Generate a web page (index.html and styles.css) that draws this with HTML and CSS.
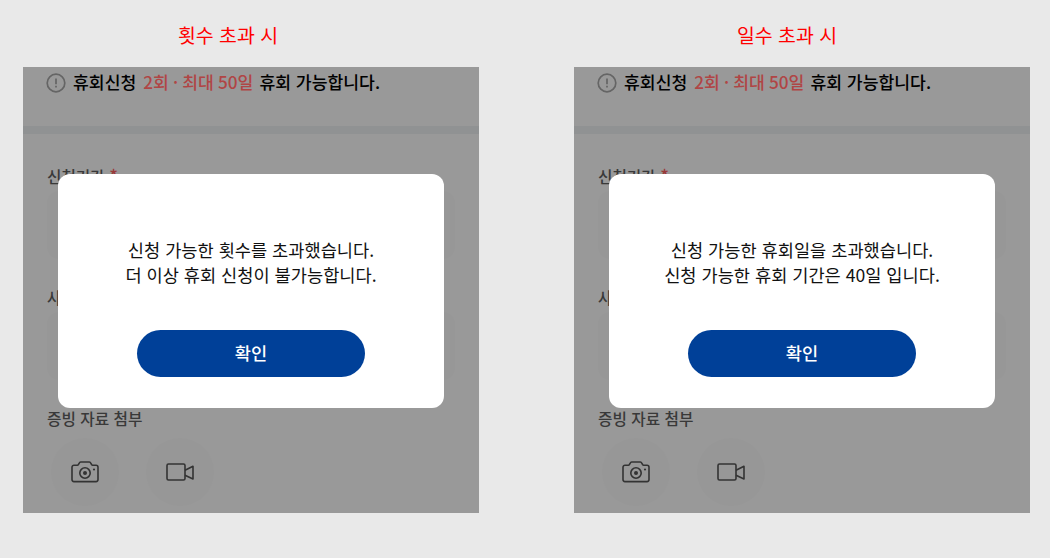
FILE: index.html
```html
<!DOCTYPE html>
<html lang="ko">
<head>
    <meta charset="UTF-8">
    <title>휴회신청 알림</title>
    <link rel="stylesheet" href="styles.css">
</head>
<body>
    <div class="container">
        <!-- 횟수 초과 -->
        <div class="case">
            <h2>횟수 초과 시</h2>
            <div class="screen">
                <div class="notice">
                    <svg class="notice-icon" viewBox="0 0 20 20">
                        <circle cx="10" cy="10" r="8.8"/>
                        <path d="M10 5.4v5.8M10 12.8v1.8"/>
                    </svg>
                    <span>휴회신청</span>
                    <span class="limit">2회 · 최대 50일</span>
                    <span>휴회 가능합니다.</span>
                </div>
                <div class="form">
                    <div class="form-item">
                        <label>신청기간 <em>*</em></label>
                        <div class="field"></div>
                    </div>
                    <div class="form-item">
                        <label>사유</label>
                        <div class="field"></div>
                    </div>
                    <div class="form-item">
                        <label>증빙 자료 첨부</label>
                        <div class="attach">
                            <span class="attach-button">
                                <svg viewBox="0 0 28 22">
                                    <path d="M3 4.2h3.5c.8 0 1-.5 1.3-1.3l.4-.8C8.5 1.3 9 1 9.7 1h8.6c.7 0 1.2.3 1.5 1.1l.4.8c.3.8.5 1.3 1.3 1.3H25a2 2 0 0 1 2 2v12.4a2 2 0 0 1-2 2H3a2 2 0 0 1-2-2V6.2a2 2 0 0 1 2-2z"/>
                                    <circle cx="14" cy="12" r="5.2"/>
                                    <circle class="dot" cx="14" cy="12" r="2"/>
                                    <circle class="dot" cx="23" cy="8.5" r="1.1"/>
                                </svg>
                            </span>
                            <span class="attach-button">
                                <svg viewBox="0 0 28 22">
                                    <rect x="1" y="3" width="18" height="16" rx="1.5"/>
                                    <path d="M19 9.3l8-4v12.6l-8-3.6"/>
                                </svg>
                            </span>
                        </div>
                    </div>
                </div>
                <div class="overlay">
                    <div class="modal">
                        <p>신청 가능한 횟수를 초과했습니다.<br>더 이상 휴회 신청이 불가능합니다.</p>
                        <button type="button">확인</button>
                    </div>
                </div>
            </div>
        </div>

        <!-- 일수 초과 -->
        <div class="case">
            <h2 class="days">일수 초과 시</h2>
            <div class="screen">
                <div class="notice">
                    <svg class="notice-icon" viewBox="0 0 20 20">
                        <circle cx="10" cy="10" r="8.8"/>
                        <path d="M10 5.4v5.8M10 12.8v1.8"/>
                    </svg>
                    <span>휴회신청</span>
                    <span class="limit">2회 · 최대 50일</span>
                    <span>휴회 가능합니다.</span>
                </div>
                <div class="form">
                    <div class="form-item">
                        <label>신청기간 <em>*</em></label>
                        <div class="field"></div>
                    </div>
                    <div class="form-item">
                        <label>사유</label>
                        <div class="field"></div>
                    </div>
                    <div class="form-item">
                        <label>증빙 자료 첨부</label>
                        <div class="attach">
                            <span class="attach-button">
                                <svg viewBox="0 0 28 22">
                                    <path d="M3 4.2h3.5c.8 0 1-.5 1.3-1.3l.4-.8C8.5 1.3 9 1 9.7 1h8.6c.7 0 1.2.3 1.5 1.1l.4.8c.3.8.5 1.3 1.3 1.3H25a2 2 0 0 1 2 2v12.4a2 2 0 0 1-2 2H3a2 2 0 0 1-2-2V6.2a2 2 0 0 1 2-2z"/>
                                    <circle cx="14" cy="12" r="5.2"/>
                                    <circle class="dot" cx="14" cy="12" r="2"/>
                                    <circle class="dot" cx="23" cy="8.5" r="1.1"/>
                                </svg>
                            </span>
                            <span class="attach-button">
                                <svg viewBox="0 0 28 22">
                                    <rect x="1" y="3" width="18" height="16" rx="1.5"/>
                                    <path d="M19 9.3l8-4v12.6l-8-3.6"/>
                                </svg>
                            </span>
                        </div>
                    </div>
                </div>
                <div class="overlay">
                    <div class="modal">
                        <p>신청 가능한 휴회일을 초과했습니다.<br>신청 가능한 휴회 기간은 40일 입니다.</p>
                        <button type="button">확인</button>
                    </div>
                </div>
            </div>
        </div>
    </div>
</body>
</html>
```
FILE: styles.css
```css
body {
    margin: 0;
    font-family: "Noto Sans CJK KR", sans-serif;
    background-color: #e9e9e9;
}
.container {
    display: flex;
    gap: 95px;
    padding: 20px 20px 0 23px;
}
.case {
    width: 456px;
}
h2 {
    margin: 0 0 17px;
    padding-right: 46px;
    font-size: 19.4px;
    font-weight: 400;
    line-height: 30px;
    text-align: center;
    color: #f00;
}
h2.days {
    padding-right: 30px;
}
.screen {
    position: relative;
    height: 446px;
    overflow: hidden;
    background-color: #fff;
}
.notice {
    display: flex;
    align-items: center;
    gap: 7px;
    height: 31px;
    padding: 0 0 28px 23px;
    border-bottom: 8px solid #f1f4f6;
    font-size: 17.2px;
    font-weight: 500;
    line-height: 29px;
    white-space: nowrap;
    color: #000;
}
.notice span {
    margin-top: -2px;
}
.notice-icon {
    width: 20px;
    height: 20px;
    fill: none;
    stroke: #a8a8a8;
    stroke-width: 1.7;
}
/* 강조 문구는 딤 위에 표시 */
.notice .limit {
    z-index: 1;
    margin-right: -1px;
    word-spacing: -0.7px;
    color: #b04545;
}
.form {
    padding: 31px 24px 0;
}
.form-item {
    height: 121px;
}
label {
    display: block;
    height: 26px;
    font-size: 15.7px;
    line-height: 24px;
    font-weight: 500;
    color: #606060;
}
label em {
    font-style: normal;
    font-size: 18px;
    line-height: 1;
    color: #ff6060;
}
.field {
    height: 68px;
    border-radius: 12px;
    background-color: #fcfcfc;
}
.attach {
    display: flex;
    gap: 27px;
    padding-left: 4px;
}
.attach-button {
    display: flex;
    align-items: center;
    justify-content: center;
    width: 68px;
    height: 68px;
    margin-top: 5px;
    border-radius: 50%;
    background-color: #fcfcfc;
}
.attach-button svg {
    width: 28px;
    height: 22px;
    fill: none;
    stroke: #555;
    stroke-width: 1.6;
    stroke-linejoin: round;
}
.attach-button .dot {
    fill: #555;
    stroke: none;
}
.overlay {
    position: absolute;
    inset: 0;
    display: flex;
    padding: 107px 35px 0;
    align-items: flex-start;
    background-color: rgba(0, 0, 0, 0.4);
}
.modal {
    display: flex;
    flex-direction: column;
    align-items: center;
    width: 386px;
    height: 233.5px;
    border-radius: 12px;
    background-color: #fff;
}
.modal p {
    margin: 63px 0 43px;
    font-size: 17.6px;
    line-height: 25px;
    text-align: center;
    white-space: nowrap;
    color: #111;
}
button {
    width: 228px;
    height: 47px;
    padding: 0 0 3px;
    border: none;
    border-radius: 24px;
    font-family: inherit;
    font-size: 17.6px;
    font-weight: 500;
    color: #fff;
    background-color: #004098;
    cursor: pointer;
}
```
